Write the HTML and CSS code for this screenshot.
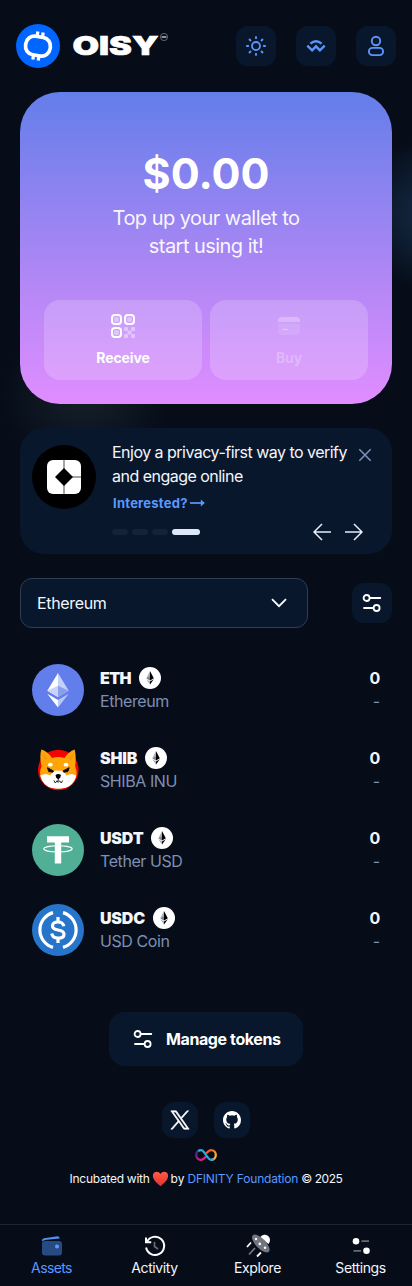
FILE: index.html
```html
<!DOCTYPE html>
<html lang="en">
<head>
<meta charset="utf-8">
<meta name="viewport" content="width=device-width, initial-scale=1">
<title>OISY Wallet</title>
<link rel="stylesheet" href="styles.css">
</head>
<body>
<svg class="defs" width="0" height="0" aria-hidden="true">
  <symbol id="eth-badge" viewBox="0 0 22 22">
    <circle cx="11" cy="11" r="11" fill="#fff"/>
    <path d="M11 4 7.400 11.200 11 13.400z" fill="#a3adb5"/>
    <path d="M11 4v9.400l3.800-2.200z" fill="#000"/>
    <path d="M7.400 12.200 11 17.600v-3.100z" fill="#a3adb5"/>
    <path d="M14.800 12.200 11 17.600v-3.100z" fill="#000"/>
    <path d="M11 9.600 7.400 11.200 11 13.400z" fill="#7b868e"/>
  </symbol>
  <symbol id="sliders" viewBox="0 0 20 20" fill="none" stroke="currentColor" stroke-width="1.8" stroke-linecap="round">
    <circle cx="4.600" cy="5" r="3"/><path d="M8.500 5H18.300M2 15h9.300"/><circle cx="14.600" cy="15" r="3"/>
  </symbol>
</svg>

<header class="header">
  <a class="brand">
    <svg class="brand-mark" viewBox="0 0 44 44">
      <circle cx="22" cy="22" r="22" fill="#0066ff"/>
      <g transform="rotate(9 22 22)">
        <path d="M19.600 12V7.800M25 12V7.800M19 36.200v-4.200M24.500 36.200v-4.200" stroke="#fff" stroke-width="3.300"/>
        <rect x="9.600" y="12.700" width="24.800" height="18.800" rx="8.600" fill="none" stroke="#fff" stroke-width="3.700"/>
      </g>
    </svg>
    <svg class="brand-word" viewBox="0 0 98 30">
      <text class="word" x="1.500" y="24.400" textLength="86" lengthAdjust="spacingAndGlyphs">OISY</text>
      <circle cx="93" cy="6" r="3.600" fill="none" stroke="#9aa0aa" stroke-width=".6"/>
      <path d="M90.600 6h4.800" stroke="#a8adb5" stroke-width="1.700"/>
    </svg>
  </a>
  <div class="header-actions">
    <button class="icon-btn" aria-label="Theme">
      <svg width="22" height="22" viewBox="0 0 22 22" fill="none" stroke="currentColor" stroke-width="1.8"><circle cx="11" cy="11" r="4"/><path d="M11 1.200v2.700M11 18.100v2.700M1.200 11h2.700M18.100 11h2.700M4 4l2 2M16 16l2 2M4 18l2-2M16 6l2-2"/></svg>
    </button>
    <button class="icon-btn" aria-label="WalletConnect">
      <svg width="22" height="22" viewBox="0 0 22 22" fill="none" stroke="currentColor" stroke-width="2.400"><path d="M5.400 8.700q5.600-4.900 11.200 0M2.300 10.700l4.800 4.600 3.900-4 3.900 4 4.800-4.600"/></svg>
    </button>
    <button class="icon-btn" aria-label="Account">
      <svg width="22" height="22" viewBox="0 0 22 22" fill="none" stroke="currentColor" stroke-width="1.900"><circle cx="11" cy="6" r="4.200"/><rect x="3.900" y="12.900" width="14.200" height="7.200" rx="3.600"/></svg>
    </button>
  </div>
</header>

<main class="main">
  <section class="hero">
    <div class="balance">$0.00</div>
    <p class="hero-text">Top up your wallet to<br>start using it!</p>
    <div class="hero-actions">
      <button class="hero-btn">
        <svg width="24" height="24" viewBox="0 0 24 24" fill="#fff"><g fill="none" stroke="#fff" stroke-width="2"><rect x="1" y="1" width="9" height="9" rx="3"/><rect x="14" y="1" width="9" height="9" rx="3"/><rect x="1" y="14" width="9" height="9" rx="3"/></g><g opacity=".4"><rect x="3" y="3" width="5" height="5" rx="1.5"/><rect x="16" y="3" width="5" height="5" rx="1.5"/><rect x="3" y="16" width="5" height="5" rx="1.5"/><rect x="13" y="13" width="4" height="4" rx="1"/><rect x="20" y="13" width="4" height="4" rx="1"/><rect x="16.5" y="16.5" width="4" height="4" rx="1"/><rect x="13" y="20" width="4" height="4" rx="1"/><rect x="20" y="20" width="4" height="4" rx="1"/></g></svg>
        <span>Receive</span>
      </button>
      <button class="hero-btn disabled" disabled>
        <svg width="24" height="24" viewBox="0 0 24 24" fill="#fff"><path opacity=".28" d="M1 8V7q0-4 4-4h14q4 0 4 4v1z"/><path opacity=".1" d="M1 9.500h22V17q0 4-4 4H5q-4 0-4-4z"/><path d="M5.500 15.500h5" stroke="#fff" stroke-opacity=".35" stroke-width="1.300"/></svg>
        <span>Buy</span>
      </button>
    </div>
  </section>

  <section class="promo">
    <svg class="promo-icon" viewBox="0 0 64 64"><circle cx="32" cy="32" r="32"/><rect x="15" y="15" width="34" height="34" rx="6" fill="#fff"/><path d="M32 15v34M32 32h17" stroke="#888" stroke-width="1.500"/><path d="M32 23l9 9-9 9-9-9z"/></svg>
    <div class="promo-body">
      <div class="promo-top">
        <p class="promo-text">Enjoy a privacy-first way to verify<br>and engage online</p>
        <svg class="close" width="14" height="14" viewBox="0 0 14 14" fill="none" stroke="#8394bb" stroke-width="1.500"><path d="M1.300 1.300l11.400 11.400M12.700 1.300 1.300 12.700"/></svg>
      </div>
      <a class="promo-link"><span>Interested?</span><svg width="15" height="8" viewBox="0 0 15 8" fill="none" stroke="currentColor" stroke-width="1.700"><path d="M0 4h13"/><path d="M10.800.6 14.800 4l-4 3.400z" fill="currentColor" stroke="none"/></svg></a>
      <div class="promo-foot">
        <div class="dots"><i></i><i></i><i></i><i class="on"></i></div>
        <div class="arrows">
          <svg width="18" height="18" viewBox="0 0 18 18"><path d="M9 1 1 9l8 8M1 9h17"/></svg>
          <svg width="18" height="18" viewBox="0 0 18 18"><path d="M9 1l8 8-8 8M17 9H0"/></svg>
        </div>
      </div>
    </div>
  </section>

  <div class="filters">
    <div class="select"><span>Ethereum</span><svg width="16" height="10" viewBox="0 0 16 10" fill="none" stroke="#fff" stroke-width="1.800"><path d="M1 1.200l7 7 7-7"/></svg></div>
    <button class="icon-btn light" aria-label="Filter"><svg width="20" height="20"><use href="#sliders"/></svg></button>
  </div>

  <ul class="tokens">
    <li class="token">
      <svg class="token-icon" viewBox="0 0 52 52"><circle cx="26" cy="26" r="26" fill="#627eea"/><path d="M26 9 15.300 26.700 26 33z" fill="#fff"/><path d="M26 9v24l10.700-6.300z" fill="#c5d0f8"/><path d="M26 21.800 15.300 26.700 26 33z" fill="#c9d2f8"/><path d="M26 21.800V33l10.700-6.300z" fill="#8aa0ef"/><path d="M15.300 29.800 26 43.600V36z" fill="#fff"/><path d="M36.700 29.800 26 43.600V36z" fill="#b9c6f7"/></svg>
      <div class="token-info"><div class="token-name"><b class="eth">ETH</b><svg class="badge"><use href="#eth-badge"/></svg></div><div class="token-sub">Ethereum</div></div>
      <div class="token-val"><b>0</b><span>-</span></div>
    </li>
    <li class="token">
      <svg class="token-icon" viewBox="0 0 52 52"><circle cx="26.300" cy="26" r="20.300" fill="#f00500"/><path d="M9.300 5.500q6.800 2.200 10.700 8.500 6-2 12.500 0 4-6.500 10.200-8.500 1.800 8 .4 16.500 2.400 6 1 10.500Q40 44.500 26.300 44.500T8.700 33q-1.500-5 .8-11Q7.300 13 9.300 5.500z" fill="#ffa409"/><path d="M11 9q0 5 2.500 8l2-2.500Q13.500 11 11 9zM41.200 9q0 5-2.500 8l-2-2.500q2-3.500 4.500-5.500z" fill="#f29a0a"/><path d="M8.300 31.500q5.500-3 10 0 3.500-6 8-4.700 4.800-1.300 8.200 4.700 4.600-3 9.800 0Q41 44.800 26.300 44.800T8.300 31.500z" fill="#fff"/><ellipse cx="18.300" cy="20.700" rx="2.400" ry="1.900" fill="#fff"/><ellipse cx="34" cy="20.700" rx="2.400" ry="1.900" fill="#fff"/><path d="M15.500 23.700 21.500 27l-.8 1.200-4-.6zM37.200 23.700 31 27l.8 1.200 4-.6z" stroke="#111" stroke-width="1"/><path d="M23.500 31q2.700-2 5.500 0l-.8 2.800-2 1.400-2-1.400z"/><path d="M26.200 34.500v2.800M22 36.500l1.300 2.500 1.700-2.200 1.200 1.600 1.400-1.600 1.700 2.200 1.300-2.500" fill="none" stroke="#111" stroke-width=".9"/></svg>
      <div class="token-info"><div class="token-name"><b class="shib">SHIB</b><svg class="badge"><use href="#eth-badge"/></svg></div><div class="token-sub">SHIBA INU</div></div>
      <div class="token-val"><b>0</b><span>-</span></div>
    </li>
    <li class="token">
      <svg class="token-icon" viewBox="0 0 52 52"><circle cx="26" cy="26" r="26" fill="#50af95"/><path d="M15 12.300h22v6.200h-7.800v20.900h-6.400V18.500H15z" fill="#fff"/><ellipse cx="26" cy="24.800" rx="14.200" ry="3.100" fill="none" stroke="#fff" stroke-width="1.100"/></svg>
      <div class="token-info"><div class="token-name"><b>USDT</b><svg class="badge"><use href="#eth-badge"/></svg></div><div class="token-sub">Tether USD</div></div>
      <div class="token-val"><b>0</b><span>-</span></div>
    </li>
    <li class="token">
      <svg class="token-icon" viewBox="0 0 52 52" fill="none" stroke="#fff" stroke-width="3.200"><circle cx="26" cy="26" r="26" fill="#2775ca" stroke="none"/><path d="M21 8.600a18.100 18.100 0 0 0 0 34.800M31 8.600a18.100 18.100 0 0 1 0 34.800"/><path d="M26 13v4.500M26 34.500V39"/><path d="M31.800 22.300q-.7-4.300-5.800-4.300-5.500 0-5.500 4 0 3 5.500 4 6 1 6 4.200 0 4-6 4-5.500 0-6.200-4.600"/></svg>
      <div class="token-info"><div class="token-name"><b>USDC</b><svg class="badge"><use href="#eth-badge"/></svg></div><div class="token-sub">USD Coin</div></div>
      <div class="token-val"><b>0</b><span>-</span></div>
    </li>
  </ul>

  <button class="manage"><svg width="20" height="20"><use href="#sliders"/></svg><span>Manage tokens</span></button>
</main>

<footer class="footer">
  <div class="socials">
    <a class="social"><svg width="20" height="20" viewBox="0 0 24 24" fill="#fff"><path d="M14.100 10.300 22.300 1h-2l-7.100 8.100L7.600 1H1l8.600 12.200L1 23h2l7.500-8.600 6 8.600H23zM11.500 13.300l-.9-1.200L3.700 2.500h3l5.500 7.800.9 1.200 7.200 10.100h-3z" stroke="#fff" stroke-width=".8"/></svg></a>
    <a class="social"><svg width="18" height="18" viewBox="0 0 16 16" fill="#fff"><path d="M8 0C3.580 0 0 3.580 0 8c0 3.540 2.290 6.530 5.470 7.590.4.07.55-.17.55-.38 0-.19-.01-.82-.01-1.490-2.010.37-2.530-.49-2.690-.94-.09-.23-.48-.94-.82-1.130-.28-.15-.68-.52-.01-.53.63-.01 1.080.58 1.230.82.72 1.210 1.870.87 2.330.66.07-.52.28-.87.51-1.070-1.780-.2-3.640-.89-3.640-3.950 0-.87.31-1.590.82-2.150-.08-.2-.36-1.020.08-2.120 0 0 .67-.21 2.200.82a7.600 7.600 0 0 1 4 0c1.530-1.040 2.200-.82 2.200-.82.44 1.100.16 1.920.08 2.120.51.56.82 1.270.82 2.150 0 3.070-1.870 3.750-3.650 3.950.29.25.54.73.54 1.480 0 1.070-.01 1.930-.01 2.200 0 .21.15.46.55.38A8 8 0 0 0 16 8c0-4.420-3.580-8-8-8z"/></svg></a>
  </div>
  <svg class="infinity" width="22" height="12" viewBox="0 0 22 12" fill="none" stroke-width="2.300">
    <defs>
      <linearGradient id="ga" x1="0" x2="1" y1="0" y2="1"><stop offset=".2" stop-color="#522785"/><stop offset=".8" stop-color="#ed1e79"/></linearGradient>
      <linearGradient id="gb" x1="0" x2="1" y1="0" y2="1"><stop offset=".2" stop-color="#f15a24"/><stop offset=".8" stop-color="#fbb03b"/></linearGradient>
    </defs>
    <path d="M6 1.200C3 1.200 1.200 3.300 1.200 6S3 10.800 6 10.800c2 0 3.600-1.800 5-3.400" stroke="url(#ga)"/>
    <path d="M11 4.600c1.400-1.600 3-3.400 5-3.400 3 0 4.800 2.100 4.800 4.800S19 10.800 16 10.800" stroke="url(#gb)"/>
    <path d="M3.200 2.100C4 1.500 4.800 1.200 6 1.200c3.800 0 6.200 9.600 10 9.600 1 0 1.800-.2 2.500-.6" stroke="#29abe2"/>
  </svg>
  <p class="credit"><span class="c1">Incubated with</span><svg class="heart" width="17" height="16" viewBox="0 0 18 16"><defs><linearGradient id="gh" x1="0" x2="0" y1="0" y2="1"><stop stop-color="#ff5a4a"/><stop offset="1" stop-color="#e8302a"/></linearGradient></defs><path d="M9 2.600C7.500 0 4.600-.3 2.800.9.6 2.400.4 5.300 1.800 8 3.300 11 6.300 13 9 15.600c2.700-2.600 5.700-4.600 7.200-7.600 1.400-2.700 1.200-5.600-1-7.100C13.400-.3 10.500 0 9 2.600z" fill="url(#gh)"/></svg><span class="c2">by</span><a class="c3">DFINITY Foundation</a><span class="c4">© 2025</span></p>
</footer>

<nav class="nav">
  <a class="nav-item active"><svg width="24" height="24" viewBox="0 0 24 24"><rect x="2" y="7" width="20" height="14.500" rx="3" fill="#284a83"/><path d="M2 7.500V6.400q0-1.800 2-2.100l13.500-2.100q2 0 2.200 2.300L7 5.800q-3 .2-5 1.700z" fill="#4f8ff8"/><circle cx="17" cy="12.500" r="2" fill="#5c9aff"/></svg><span class="n1">Assets</span></a>
  <a class="nav-item"><svg width="24" height="24" viewBox="0 0 24 24" fill="none" stroke="#fff" stroke-width="2"><path d="M3.900 7.800A9.100 9.100 0 1 1 3.100 13.500M3 3.500v4.700h5.200"/><path d="M11.500 8v4.500l3.500 2.500" stroke="#666b74" stroke-width="1.700"/></svg><span>Activity</span></a>
  <a class="nav-item"><svg width="26" height="24" viewBox="0 0 26 24"><path d="M15 3.500Q17 0 20.500.8 25 2 25 6q0 2.500-1.500 4z" fill="#fff"/><ellipse cx="15.800" cy="9.500" rx="11.500" ry="5" transform="rotate(46 15.800 9.500)" fill="#70757e"/><circle cx="11" cy="5" r="1.200" fill="#fff"/><circle cx="14.800" cy="9.900" r="1.300" fill="#fff"/><circle cx="20" cy="13.700" r="1.200" fill="#fff"/><path d="M2 13l4-4.500M12 22.500l4-4" stroke="#fff" stroke-width="1.800"/><path d="M4 20.500l6-6.500" stroke="#777b84" stroke-width="1.700"/></svg><span>Explore</span></a>
  <a class="nav-item"><svg width="24" height="24" viewBox="0 0 24 24"><path d="M12.500 7.200H20M4.500 16.800H12" stroke="#666b74" stroke-width="1.700"/><circle cx="7" cy="7.200" r="3.300" fill="#fff"/><circle cx="17.500" cy="16.800" r="3.300" fill="#fff"/></svg><span>Settings</span></a>
</nav>
</body>
</html>
```

FILE: styles.css
```css
* { box-sizing: border-box; }
body {
  margin: 0;
  width: 412px;
  height: 1286px;
  display: flex;
  flex-direction: column;
  overflow: hidden;
  font-family: Inter, sans-serif;
  color: #f3f6fc;
  background:
    radial-gradient(ellipse 70px 75px at 430px 214px, #11233a 30%, transparent 100%),
    radial-gradient(ellipse 85px 75px at 85px 395px, #141e28 10%, transparent 100%),
    #060d19;
}
button { border: 0; margin: 0; padding: 0; font: inherit; color: inherit; }
p, ul { margin: 0; padding: 0; list-style: none; }
svg { display: block; flex: none; }
span, a, b { white-space: nowrap; }
.defs { position: absolute; }

.header { height: 92px; padding: 0 16px; display: flex; align-items: center; justify-content: space-between; }
.brand { display: flex; align-items: center; gap: 11px; }
.brand-mark { width: 44px; height: 44px; }
.brand-word { width: 98px; height: 30px; overflow: visible; }
.word { font: 900 26px Inter, sans-serif; fill: #fff; stroke: #fff; stroke-width: .6; }
.header-actions { display: flex; gap: 20px; }
.icon-btn { width: 40px; height: 40px; border-radius: 12px; background: #09172c; color: #5c96fc; display: grid; place-items: center; }
.icon-btn.light { color: #fff; }

.main { display: flex; flex-direction: column; padding: 0 20px; }
.hero { height: 312px; border-radius: 40px; padding: 51px 24px 24px; display: flex; flex-direction: column; align-items: center; background: linear-gradient(#637eea, #b688f6 64%, #e08dff); color: #fff; }
.balance { font-size: 43px; font-weight: 700; line-height: 60px; }
.hero-text { margin-top: 1px; font-size: 20px; line-height: 28px; letter-spacing: -.54px; text-align: center; opacity: .93; }
.hero-actions { margin-top: auto; width: 100%; display: grid; grid-template-columns: 1fr 1fr; gap: 8px; }
.hero-btn { height: 80px; border-radius: 16px; background: rgba(255,255,255,.18); display: flex; flex-direction: column; align-items: center; padding-top: 14px; gap: 10px; font-size: 14px; font-weight: 700; line-height: 20px; letter-spacing: -.1px; }
.hero-btn.disabled span { color: rgba(255,255,255,.27); }

.promo { margin-top: 24px; height: 126px; border-radius: 24px; background: #09172c; padding: 12px 24px 12px 12px; display: flex; gap: 16px; }
.promo-icon { width: 64px; height: 64px; margin-top: 5px; }
.promo-body { flex: 1; min-width: 0; }
.promo-top { display: flex; justify-content: space-between; }
.promo-text { font-size: 16px; line-height: 24px; letter-spacing: -.52px; white-space: nowrap; }
.close { margin: 8px -4px 0 0; }
.promo-link { margin-top: 5px; display: flex; align-items: center; gap: 2px; padding-left: 1px; font-size: 13px; font-weight: 700; line-height: 20px; letter-spacing: .25px; color: #5b98ff; }
.promo-foot { margin-top: 9px; display: flex; align-items: center; justify-content: space-between; height: 20px; }
.dots { display: flex; gap: 4px; }
.dots i { width: 16px; height: 6px; border-radius: 3px; background: #14233a; }
.dots .on { width: 28px; background: #dce7fa; }
.arrows { display: flex; gap: 14px; margin-right: 5px; fill: none; stroke: #e8eefa; stroke-width: 1.500; }

.filters { margin-top: 24px; height: 50px; display: flex; align-items: center; justify-content: space-between; }
.select { width: 288px; height: 50px; border: 1px solid #303e54; border-radius: 12px; background: #09172c; padding: 0 20px 0 16px; display: flex; align-items: center; justify-content: space-between; font-size: 16px; letter-spacing: -.35px; }

.tokens { margin-top: 22px; }
.token { height: 80px; padding: 0 12px; display: flex; align-items: center; }
.token-icon { width: 52px; height: 52px; }
.token-info { flex: 1; margin-left: 16px; }
.token-name { display: flex; align-items: center; gap: 8px; height: 24px; font-size: 16px; font-weight: 700; letter-spacing: -.2px; }
.token-name .eth { letter-spacing: -.6px; }
.token-name .shib { letter-spacing: -.15px; }
.badge { width: 22px; height: 22px; }
.token-sub { height: 24px; line-height: 23px; font-size: 16px; letter-spacing: -.42px; color: #7e8fb4; }
.token-val { display: flex; flex-direction: column; align-items: flex-end; font-size: 16px; line-height: 24px; }
.token-val b { letter-spacing: -.3px; }
.token-val span { color: #7e8fb4; line-height: 23px; height: 24px; }

.manage { margin-top: 42px; align-self: center; width: 194px; height: 54px; border-radius: 16px; background: #09172c; display: flex; align-items: center; padding-left: 24px; gap: 13px; font-size: 16px; font-weight: 700; letter-spacing: -.4px; color: #fff; }

.footer { margin-top: 36px; display: flex; flex-direction: column; align-items: center; }
.socials { display: flex; gap: 16px; }
.social { width: 36px; height: 36px; border-radius: 12px; background: #09172c; display: grid; place-items: center; }
.infinity { margin-top: 11px; }
.credit { margin-top: 8px; display: flex; align-items: center; font-size: 12px; line-height: 20px; }
.heart { margin: 0 2px; }
.credit .c1 { letter-spacing: -.27px; }
.credit .c3 { color: #5b98ff; margin: 0 3px; letter-spacing: -.17px; }
.credit .c4 { letter-spacing: -.45px; }

.nav { margin-top: auto; height: 62px; border-top: 1px solid #1c2531; display: grid; grid-template-columns: repeat(4, 1fr); }
.nav-item { display: flex; flex-direction: column; align-items: center; padding-top: 9px; font-size: 14px; line-height: 20px; letter-spacing: -.4px; }
.nav-item.active { color: #5b98ff; }
.nav-item .n1 { letter-spacing: -.6px; }
```
